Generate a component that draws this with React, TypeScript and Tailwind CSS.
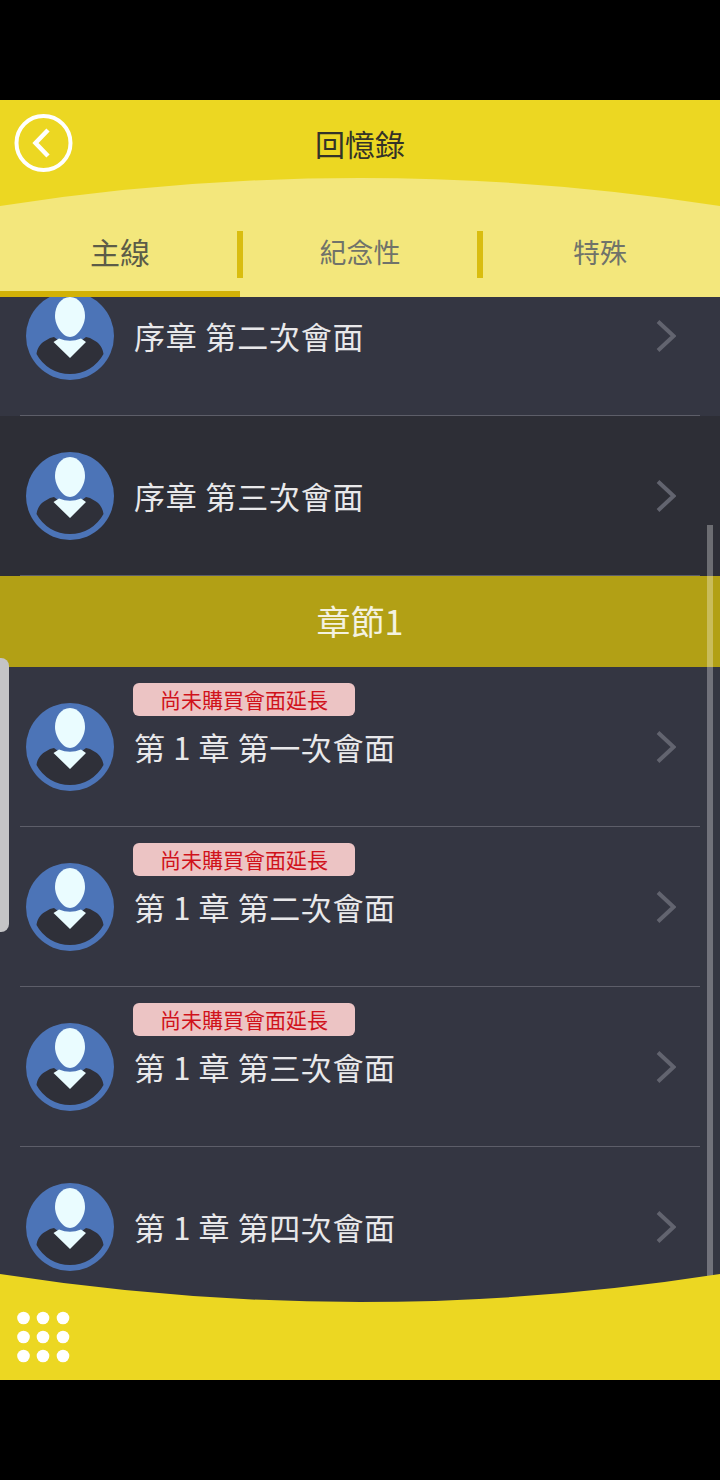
const FONT = { fontFamily: '"Noto Sans CJK TC", "Noto Sans", sans-serif' };

function Avatar() {
  return (
    <svg width="88" height="88" viewBox="0 0 88 88" className="shrink-0">
      <circle cx="44" cy="44" r="44" fill="#4c74b7" />
      <path d="M10.5 62C11 57 14 52 18 49.5L24 46L28 45L32 48L44 52L56 48L60 45L64 46L70 49.5C74 52 77 57 77.5 62A38 38 0 0 1 10.5 62Z" fill="#2f3039" />
      <path d="M27.5 50L33 46.5Q44 51 55 46.5L60 50L44 66Z" fill="#eafcff" />
      <path d="M44 5C53 5 59 14 59 24C59 34 51 45 44 45C37 45 29 34 29 24C29 14 35 5 44 5Z" fill="#eafcff" />
    </svg>
  );
}

function Chevron({ className }: { className: string }) {
  return (
    <svg width="20" height="32" viewBox="0 0 20 32" className={className}>
      <path d="M2 1.5L17.5 16L2 30.5" fill="none" stroke="#62646f" strokeWidth="4" />
    </svg>
  );
}

function Row({ title, badge, dark, last, clip, chapter }: { title: string; badge?: boolean; dark?: boolean; last?: boolean; clip?: boolean; chapter?: boolean }) {
  return (
    <div className={`h-[160px] flex items-center pl-[26px] pr-[44px] relative ${dark ? "bg-[#2d2e36]" : "bg-[#343642]"} ${clip ? "mt-[-41px]" : ""}`}>
      <Avatar />
      <div className="ml-[20px] flex-1 relative">
        {badge && (
          <div className="absolute left-[-1px] top-[-44px] w-[222px] h-[33px] rounded-[6px] bg-[#ecc4c4] text-[#d0121b] text-[21px] leading-[33px] text-center">
            尚未購買會面延長
          </div>
        )}
        <div className={`text-[31px] leading-[40px] text-[#e8e8ea] ${chapter ? "tracking-[0.6px]" : "tracking-[0.8px]"}`}>{title}</div>
      </div>
      <Chevron className="shrink-0" />
      {!last && <div className="absolute left-[20px] right-[20px] bottom-0 h-px bg-[#5d5e69]" />}
    </div>
  );
}

export default function App() {
  return (
    <div className="w-[720px] h-[1480px] bg-black flex flex-col overflow-hidden" style={FONT}>
      <div className="h-[100px] shrink-0" />
      <div className="relative h-[197px] shrink-0 bg-[#ecd722]">
        <svg width="720" height="119" viewBox="0 0 720 119" className="absolute left-0 top-[78px]">
          <path d="M0 28Q360 -28 720 28L720 119L0 119Z" fill="#f3e77c" />
        </svg>
        <div className="relative h-[90px] flex items-center justify-center">
          <svg width="60" height="60" viewBox="0 0 60 60" className="absolute left-[14px] top-[13px]">
            <circle cx="29.5" cy="30" r="27" fill="none" stroke="#fff" strokeWidth="4" />
            <path d="M34 17L21.5 30L34 43" fill="none" stroke="#fff" strokeWidth="4.5" />
          </svg>
          <div className="text-[30px] leading-[40px] text-[#333228] mt-[-4px]">回憶錄</div>
        </div>
        <div className="relative grid grid-cols-3 h-[107px]">
          <div className="relative flex items-center justify-center pt-[16px] text-[30px] text-[#5c5c48]">
            主線
            <div className="absolute left-0 right-0 bottom-0 h-[6px] bg-[#d2b207]" />
            <div className="absolute right-[-3px] top-[41px] w-[6px] h-[47px] bg-[#d9bd0f]" />
          </div>
          <div className="relative flex items-center justify-center pt-[18px] text-[27px] text-[#70736a]">
            紀念性
            <div className="absolute right-[-3px] top-[41px] w-[6px] h-[47px] bg-[#d9bd0f]" />
          </div>
          <div className="flex items-center justify-center pt-[18px] text-[27px] text-[#70736a]">特殊</div>
        </div>
      </div>
      <div className="relative flex-1 min-h-0 overflow-hidden bg-[#343642]">
        <Row title="序章 第二次會面" clip />
        <Row title="序章 第三次會面" dark />
        <div className="h-[91px] bg-[#b2a015] flex items-center justify-center pb-[2px] text-[34px] text-[#f4f2e0]">章節1</div>
        <Row title="第 1 章 第一次會面" badge chapter />
        <Row title="第 1 章 第二次會面" badge chapter />
        <Row title="第 1 章 第三次會面" badge chapter />
        <Row title="第 1 章 第四次會面" last chapter />
        <div className="absolute left-[707px] top-[228px] w-[6px] h-[752px] bg-white/30" />
        <div className="absolute left-0 top-[361px] w-[9px] h-[274px] rounded-r-[8px] bg-[#c4c4c6]" />
      </div>
      <div className="relative h-[78px] shrink-0 bg-[#ecd722]">
        <svg width="720" height="29" viewBox="0 0 720 29" className="absolute left-0 top-[-28px]">
          <path d="M0 0Q360 56 720 0L720 29L0 29Z" fill="#ecd722" />
        </svg>
        <svg width="60" height="60" viewBox="0 0 60 60" className="absolute left-[14px] top-[5px]">
          {[9.5, 29, 49].map((x) => [11, 30, 49].map((y) => <circle key={`${x}-${y}`} cx={x} cy={y} r="6.3" fill="#fff" />))}
        </svg>
      </div>
      <div className="h-[100px] shrink-0" />
    </div>
  );
}
